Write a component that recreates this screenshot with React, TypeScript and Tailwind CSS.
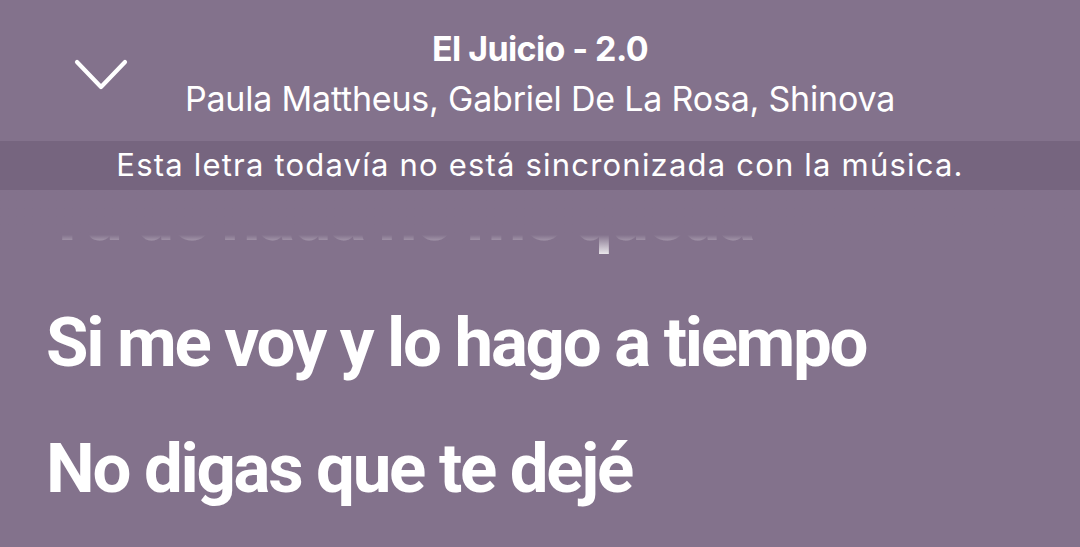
import React from "react";

const lines = [
  "Tu de nada no me queda",
  "Si me voy y lo hago a tiempo",
  "No digas que te dejé",
];

const ChevronDown = () => (
  <svg width="56" height="34" viewBox="0 0 56 34" fill="none">
    <path
      d="M4 4 L28 29 L52 4"
      stroke="white"
      strokeWidth="4.2"
      strokeLinecap="round"
      strokeLinejoin="round"
    />
  </svg>
);

export default function App() {
  return (
    <div
      className="w-[1080px] h-[547px] overflow-hidden bg-[#83728c] text-white"
      style={{ fontFamily: "Inter, 'Noto Sans', sans-serif" }}
    >
      {/* header */}
      <div className="relative flex h-[141px] flex-col items-center pt-[29px]">
        <div className="absolute left-[73px] top-[58px]">
          <ChevronDown />
        </div>
        <div className="text-[34px] font-bold leading-[40px] tracking-[-0.6px]">
          El Juicio - 2.0
        </div>
        <div className="mt-[10px] text-[34px] leading-[40px] tracking-[-0.2px]">
          Paula Mattheus, Gabriel De La Rosa, Shinova
        </div>
      </div>

      {/* sync notice */}
      <div className="flex h-[49px] items-center justify-center bg-[#76657f] text-[31px] tracking-[1.2px]">
        Esta letra todavía no está sincronizada con la música.
      </div>

      {/* lyrics */}
      <div className="relative h-[357px] overflow-hidden">
        <div
          className="mt-[-36px] px-[46px]"
          style={{ fontFamily: "Roboto, Inter, sans-serif" }}
        >
          {lines.map((l, i) => (
            <div
              key={i}
              className="text-[69px] font-bold leading-[126px] tracking-[-2.3px] whitespace-nowrap"
            >
              {l}
            </div>
          ))}
        </div>
        <div className="absolute inset-x-0 top-0 h-[68px] bg-gradient-to-b from-[#83728c] from-[66%] to-[#83728c]/0" />
      </div>
    </div>
  );
}
